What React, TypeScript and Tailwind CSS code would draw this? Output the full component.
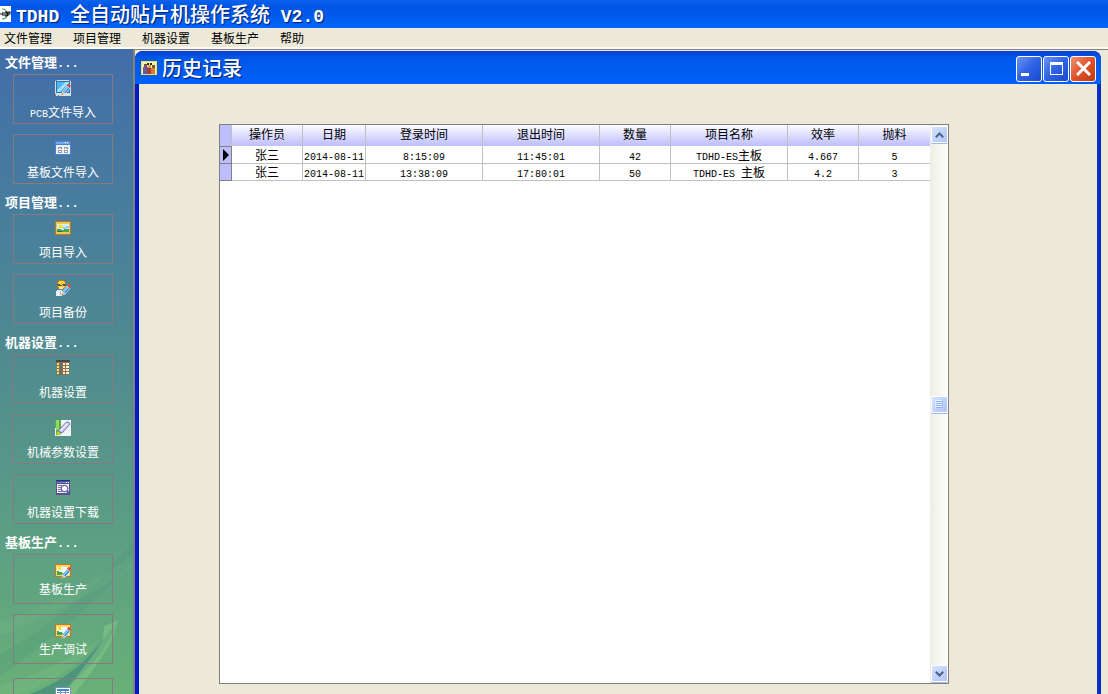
import React from "react";

const latinSizes = {
  small: "font-['Liberation_Mono',monospace] text-[10px]",
  heading: "font-['Liberation_Mono',monospace] text-xs",
  title: "font-['Liberation_Mono',monospace] text-lg font-bold",
};

function Mixed({ text, size = "small" }: { text: string; size?: keyof typeof latinSizes }) {
  return (
    <>
      {text.split(/([!-~ ]+)/).map((part, i) =>
        i % 2 ? (
          <span key={i} className={"leading-none whitespace-pre " + latinSizes[size]}>{part}</span>
        ) : (
          part
        ),
      )}
    </>
  );
}

function Icon({ children }: { children: React.ReactNode }) {
  return (
    <svg viewBox="0 0 16 16" className="size-4 shrink-0" aria-hidden="true" shapeRendering="crispEdges">
      {children}
    </svg>
  );
}

function Pencil() {
  return (
    <g shapeRendering="auto">
      <path d="M6.4 15.4l.8-4L12 5.6l3.4 2.6-5 6z" fill="#e9f4fb" />
      <path d="M7.8 11.6l4.4-5.2 2.5 2-4.4 5.2z" fill="#2f8ade" />
      <path d="M8.9 12.2l4.3-5.1" stroke="#a5dbff" strokeWidth="1.1" />
      <path d="M12 5.6l1.3-1.5q2 0 2.6 2.2l-1.3 1.7z" fill="#e2463a" />
      <path d="M6.6 15.2l1.1-3.4 2.3 1.8z" fill="#e8b878" />
      <path d="M6.5 15.3l.5-1.4.9.7z" fill="#333" />
    </g>
  );
}

const icons = {
  boardEdit: (
    <Icon>
      <path d="M0 0h16v16H0z" fill="#d9dfe5" />
      <path d="M0 0h2v1H0zM14 0h2v1h-2zM0 14h1v2H0zM3 15h1v1H3z" fill="#79818b" />
      <path d="M1 1h14v12H1z" fill="#2677b8" />
      <path d="M2 2h12v10H2z" fill="#51b6f4" />
      <path d="M2 10l9-8h3L4 12H2z" fill="#a9e2ff" />
      <Pencil />
    </Icon>
  ),
  windowGrid: (
    <Icon>
      <path d="M0 1h16v14H0z" fill="#4b83d5" />
      <path d="M1 2h14v2H1z" fill="#74aaf0" />
      <path d="M10 2h1v1h-1zM12 2h1v1h-1z" fill="#fff" />
      <path d="M14 2h1v1h-1z" fill="#f04b38" />
      <path d="M1 5h14v9H1z" fill="#eceff5" />
      <path d="M3 7h4v2H3zM9 7h4v2H9zM3 10h4v3H3zM9 10h4v3H9z" fill="#929caa" />
      <path d="M4 8h1v1H4zM10 8h1v1h-1zM4 11h2v1H4zM10 11h2v1h-2z" fill="#fff" />
    </Icon>
  ),
  picture: (
    <Icon>
      <path d="M0 1h16v14H0z" fill="#b9791e" />
      <path d="M1 2h14v12H1z" fill="#f5c453" />
      <path d="M2 4h12v8H2z" fill="#d5eefb" />
      <path d="M4 5h4v3H4z" fill="#ffe12c" />
      <path d="M8 7h3V6h3v2h-3v1H8z" fill="#8fcaf0" />
      <path d="M2 9h4v1h3V9h5v3H2z" fill="#48a451" />
      <path d="M2 11h5v1H2z" fill="#26733b" />
    </Icon>
  ),
  userEdit: (
    <Icon>
      <path d="M3 0h6v1h2v7H9v1H3V8H2V2h1z" fill="#b9781f" />
      <path d="M4 1h5v1h1v5H9v1H4V7H3V2h1z" fill="#ffd13e" />
      <path d="M2 4h3v1h2V4h4v2H8V5H7v1H3V5H2z" fill="#55585a" />
      <path d="M4 7h4v2H4z" fill="#ffe69b" />
      <path d="M2 10h5v6H1v-5h1z" fill="#f2f2fa" />
      <path d="M5 11h1v4H5z" fill="#a9b4d2" />
      <Pencil />
    </Icon>
  ),
  machine: (
    <Icon>
      <path d="M1 0h14v2H1z" fill="#4e4747" />
      <path d="M1 2h14v1H1zM2 3h12v12H2z" fill="#926b59" />
      <path d="M2 3h2v2H2zM2 6h2v2H2zM2 9h2v2H2zM2 12h2v2H2z" fill="#ffe34b" />
      <path d="M5 3h2v2H5zM5 6h2v2H5zM5 9h2v2H5zM5 12h2v2H5z" fill="#497274" />
      <path d="M8 3h2v2H8zM11 3h3v2h-3zM8 6h2v2H8zM11 6h3v2h-3zM8 9h2v2H8zM11 9h3v2h-3zM8 12h2v2H8zM11 12h3v2h-3z" fill="#fff1be" />
    </Icon>
  ),
  marker: (
    <Icon>
      <path d="M0 0h16v16H0z" fill="#f4f5f2" />
      <path d="M0 0h6v13H4v2H1V8H0z" fill="#56af45" />
      <path d="M1 0h3v10H1z" fill="#8fda67" />
      <g shapeRendering="auto">
        <path d="M3 11L11 2.4Q14 1 15 4L7 13z" fill="#c9cafa" stroke="#7274b5" />
        <path d="M5.5 10.5l7-7" stroke="#f3f2ff" strokeWidth="1.5" />
        <path d="M1 15l1.5-4 3.5 3z" fill="#e0ed36" stroke="#76a128" strokeWidth=".6" />
      </g>
    </Icon>
  ),
  windowSearch: (
    <Icon>
      <path d="M1 0h14v15H1z" fill="#5a5190" />
      <path d="M1 0h14v1H1z" fill="#173481" />
      <path d="M2 2h12v1H2z" fill="#607ec7" />
      <path d="M11 2h1v1h-1zM13 2h1v1h-1z" fill="#fff" />
      <path d="M2 4h12v9H2z" fill="#f4f2f8" />
      <path d="M3 5h4v1H3zM3 7h3v1H3zM3 9h3v1H3zM3 11h4v1H3z" fill="#777482" />
      <g shapeRendering="auto">
        <circle cx="9.5" cy="8.5" r="3.2" fill="#fff" stroke="#746db5" strokeWidth="1.3" />
        <path d="M12 11l3 3.5" stroke="#5756a2" strokeWidth="2" />
      </g>
    </Icon>
  ),
  pictureEdit: (
    <Icon>
      <path d="M0 1h16v13H0z" fill="#c5781b" />
      <path d="M1 2h14v11H1z" fill="#ffd66a" />
      <path d="M2 4h12v8H2z" fill="#edfaff" />
      <path d="M3 4h3v3H3z" fill="#ffe32c" />
      <path d="M2 8h2v1h3v1h5v2H2z" fill="#42a94a" />
      <Pencil />
    </Icon>
  ),
  sheet: (
    <Icon>
      <path d="M0 0h16v16H0z" fill="#7e92a5" />
      <path d="M1 1h14v14H1z" fill="#fff" />
      <path d="M2 2h12v2H2z" fill="#3c87df" />
      <path d="M2 5h12v1H2zM2 8h12v1H2zM5 4h1v10H5zM10 4h1v10h-1z" fill="#8293a6" />
    </Icon>
  ),
};

type Item = { label: string; icon: keyof typeof icons; compact?: boolean };

const groups: { title: string; items: Item[] }[] = [
  {
    title: "文件管理...",
    items: [
      { label: "PCB文件导入", icon: "boardEdit" },
      { label: "基板文件导入", icon: "windowGrid" },
    ],
  },
  {
    title: "项目管理...",
    items: [
      { label: "项目导入", icon: "picture" },
      { label: "项目备份", icon: "userEdit" },
    ],
  },
  {
    title: "机器设置...",
    items: [
      { label: "机器设置", icon: "machine" },
      { label: "机械参数设置", icon: "marker" },
      { label: "机器设置下载", icon: "windowSearch" },
    ],
  },
  {
    title: "基板生产...",
    items: [
      { label: "基板生产", icon: "pictureEdit", compact: true },
      { label: "生产调试", icon: "pictureEdit", compact: true },
    ],
  },
];

const sideButton =
  "flex h-[50px] w-full shrink-0 flex-col items-center border border-[#87797f] text-xs leading-4 text-white";

function SideButton({ item }: { item: Item }) {
  return (
    <button className={sideButton + (item.compact ? " gap-[2px] pt-2" : " gap-2 pt-[5px]")}>
      {icons[item.icon]}
      <span className="whitespace-nowrap">
        <Mixed text={item.label} />
      </span>
    </button>
  );
}

function Sidebar() {
  return (
    <aside className="relative w-[133px] shrink-0 overflow-hidden bg-linear-to-b from-[#426da9] via-[#518c8e] via-50% to-[#68b077]">
      <svg className="absolute bottom-0 left-0 h-40 w-full" viewBox="0 0 133 160" preserveAspectRatio="none" aria-hidden="true">
        <path d="M0 120Q75 80 133 8V28Q75 90 0 142z" fill="#3f877b" opacity=".16" />
        <path d="M0 88Q80 60 133 20V33Q80 70 0 102z" fill="#8cc28f" opacity=".15" />
        <path d="M30 160Q72 144 98 112L119 86 112 100Q100 124 84 138L62 160z" fill="#327c80" opacity=".5" />
        <path d="M62 160Q88 130 103 106L104 92 119 86 110 110Q93 138 74 160z" fill="#91cf8a" opacity=".45" />
        <path d="M0 152Q60 132 100 106Q65 145 20 160H0z" fill="#91c78c" opacity=".2" />
      </svg>
      <nav className="relative flex flex-col pt-[3px]">
        {groups.map((g) => (
          <section key={g.title} className="mb-2">
            <h2 className="mb-[2px] pl-[5px] text-[13px] leading-5 font-bold text-white">
              <Mixed text={g.title} size="heading" />
            </h2>
            <div className="flex flex-col gap-[10px] pr-5 pl-[13px]">
              {g.items.map((item) => (
                <SideButton key={item.label} item={item} />
              ))}
            </div>
          </section>
        ))}
        <div className="pt-[6px] pr-5 pl-[13px]">
          <button aria-label="更多" className={sideButton + " pt-2"}>
            {icons.sheet}
          </button>
        </div>
      </nav>
    </aside>
  );
}

const columns = [
  { name: "操作员", width: "w-[71px]" },
  { name: "日期", width: "w-[63px]" },
  { name: "登录时间", width: "w-[117px]" },
  { name: "退出时间", width: "w-[117px]" },
  { name: "数量", width: "w-[71px]" },
  { name: "项目名称", width: "w-[117px]" },
  { name: "效率", width: "w-[71px]" },
  { name: "抛料", width: "w-[71px]" },
];

const rows = [
  ["张三", "2014-08-11", "8:15:09", "11:45:01", "42", "TDHD-ES主板", "4.667", "5"],
  ["张三", "2014-08-11", "13:38:09", "17:80:01", "50", "TDHD-ES 主板", "4.2", "3"],
];

const scrollButton =
  "flex size-[17px] items-center justify-center rounded-xs border border-white bg-linear-to-br from-[#d5e1fe] to-[#aec5f8] shadow-[0_1px_0_#9eb8e8]";

function ScrollBar() {
  return (
    <div className="flex w-[18px] shrink-0 flex-col items-center justify-between bg-linear-to-r from-[#eeede5] to-[#fefefb] py-px">
      <button aria-label="向上滚动" className={scrollButton}>
        <svg viewBox="0 0 9 6" className="h-[6px] w-[9px]" fill="none" stroke="#4d6185" strokeWidth="2">
          <path d="M.8 5.2l3.7-3.7 3.7 3.7" />
        </svg>
      </button>
      <button aria-label="滚动滑块" className={scrollButton}>
        <svg viewBox="0 0 8 8" className="size-2" shapeRendering="crispEdges">
          <path d="M0 0h7v1H0zM0 2h7v1H0zM0 4h7v1H0zM0 6h7v1H0z" fill="#eef4fe" />
          <path d="M1 1h7v1H1zM1 3h7v1H1zM1 5h7v1H1zM1 7h7v1H1z" fill="#8cb0f8" />
        </svg>
      </button>
      <button aria-label="向下滚动" className={scrollButton}>
        <svg viewBox="0 0 9 6" className="h-[6px] w-[9px]" fill="none" stroke="#4d6185" strokeWidth="2">
          <path d="M.8.8l3.7 3.7L8.2.8" />
        </svg>
      </button>
    </div>
  );
}

function HistoryTable() {
  return (
    <div className="mt-10 mr-[148px] mb-[10px] ml-20 flex min-h-0 flex-1 border border-[#808080] bg-white">
      <div className="min-w-0 flex-1 overflow-hidden">
        <table className="w-full table-fixed border-separate border-spacing-0 text-center text-xs leading-4 text-black">
          <thead>
            <tr className="h-[21px] bg-linear-to-b from-[#fdfdff] to-[#bdbdfb]">
              <th aria-label="当前行" className="w-3 border-r border-[#c0c0c0] bg-[#bdbdfb] p-0" />
              {columns.map((c, i) => (
                <th
                  key={c.name}
                  className={
                    c.width + " p-0 pb-[3px] font-normal " + (i < columns.length - 1 ? "border-r border-[#c0c0c0]" : "")
                  }
                >
                  {c.name}
                </th>
              ))}
            </tr>
          </thead>
          <tbody>
            {rows.map((r, ri) => (
              <tr key={ri} className={ri === 0 ? "h-[18px]" : "h-[17px]"}>
                <td className={"border-r border-b border-[#808080] bg-[#bdbdfb] p-0 " + (ri === 0 ? "border-t" : "")}>
                  {ri === 0 && (
                    <svg viewBox="0 0 6 12" className="mx-auto h-3 w-[6px]">
                      <path d="M0 0l6 6-6 6z" fill="#000" />
                    </svg>
                  )}
                </td>
                {r.map((v, i) => (
                  <td
                    key={i}
                    className={
                      "border-b border-[#c0c0c0] p-0 whitespace-nowrap " + (i < r.length - 1 ? "border-r" : "")
                    }
                  >
                    <div className="h-4 leading-4">
                      <Mixed text={v} />
                    </div>
                  </td>
                ))}
              </tr>
            ))}
          </tbody>
        </table>
      </div>
      <ScrollBar />
    </div>
  );
}

const windowButton = "flex size-[26px] items-center justify-center rounded-[3px] border border-white";

function HistoryWindow() {
  return (
    <section className="mt-px mr-[7px] flex min-w-0 flex-1 flex-col rounded-t-lg bg-linear-to-r from-[#0019cf] via-[#0855dd] via-50% to-[#0030c4]">
      <header className="flex h-[33px] shrink-0 items-center gap-[5px] rounded-t-lg bg-linear-to-b from-[#0a3fd0] via-[#0058e8] via-20% to-[#0060fa] pr-[5px] pl-[6px]">
        <svg viewBox="0 0 16 14" className="h-[14px] w-4" aria-hidden="true" shapeRendering="crispEdges">
          <path d="M0 0h16v14H0z" fill="#eee44c" />
          <path d="M1 1h14v12H1z" fill="#f9f5a7" />
          <path d="M3 3h3v3H3z" fill="#765147" />
          <path d="M2 6h5v7H2z" fill="#6959a0" />
          <path d="M6 2h2v2H6zM9 2h2v2H9z" fill="#2c2521" />
          <path d="M7 4h3v3H7z" fill="#d59b60" />
          <path d="M6 7h4v6H6z" fill="#a83e2f" />
          <path d="M11 4h3v3h-3z" fill="#805439" />
          <path d="M10 7h4v6h-4z" fill="#d8782d" />
        </svg>
        <h1 className="flex-1 text-xl leading-7 font-medium text-white [text-shadow:1px_1px_1px_#001d70]">历史记录</h1>
        <div className="flex gap-px pt-[2px]">
          <button aria-label="最小化" className={windowButton + " bg-linear-to-br from-[#6b91f5] via-[#2e62e4] to-[#1b49ce]"}>
            <span className="mt-3 mr-2 h-[3px] w-2 bg-white" />
          </button>
          <button aria-label="最大化" className={windowButton + " bg-linear-to-br from-[#6b91f5] via-[#2e62e4] to-[#1b49ce]"}>
            <span className="h-[13px] w-[13px] border border-t-[3px] border-white" />
          </button>
          <button aria-label="关闭" className={windowButton + " bg-linear-to-br from-[#f1916e] via-[#df5028] to-[#c13a10]"}>
            <svg viewBox="0 0 15 15" className="size-[15px]" stroke="#fff" strokeWidth="3">
              <path d="M1 1l13 13M14 1L1 14" />
            </svg>
          </button>
        </div>
      </header>
      <div className="mr-1 ml-1 flex min-h-0 flex-1 flex-col bg-[#ece9d8]">
        <HistoryTable />
      </div>
    </section>
  );
}

export default function App() {
  return (
    <div className="flex h-screen flex-col overflow-hidden bg-[#ece9d8] font-['Noto_Sans_CJK_SC',sans-serif]">
      <header className="flex h-7 shrink-0 items-center gap-[5px] bg-linear-to-b from-[#0b62ef] via-[#0054e3] via-25% to-[#0064fb]">
        <svg viewBox="0 0 11 16" className="h-4 w-[11px]" aria-hidden="true">
          <path d="M0 0h11v16H0z" fill="#fff" />
          <path d="M2 3q5 0 5 5t-5 5" fill="none" stroke="#4aa765" strokeWidth="1.2" />
          <path d="M0 8h3M3 6v4M5 6v4M5 6h2v4H5M8 6v4M8 6h2v2H8" fill="none" stroke="#111" strokeWidth="1.1" />
        </svg>
        <div className="text-xl leading-6 font-medium whitespace-nowrap text-white [text-shadow:1px_1px_1px_#001d70]">
          <Mixed text="TDHD 全自动贴片机操作系统 V2.0" size="title" />
        </div>
      </header>
      <nav className="flex h-[21px] shrink-0 items-center gap-[21px] border-b-2 border-[#fdfcf5] pl-1 text-xs leading-4 text-black">
        {["文件管理", "项目管理", "机器设置", "基板生产", "帮助"].map((m) => (
          <button key={m}>{m}</button>
        ))}
      </nav>
      <div className="flex min-h-0 flex-1">
        <Sidebar />
        <main className="flex min-w-0 flex-1 border-t border-l-2 border-[#85827a]">
          <HistoryWindow />
        </main>
      </div>
    </div>
  );
}
